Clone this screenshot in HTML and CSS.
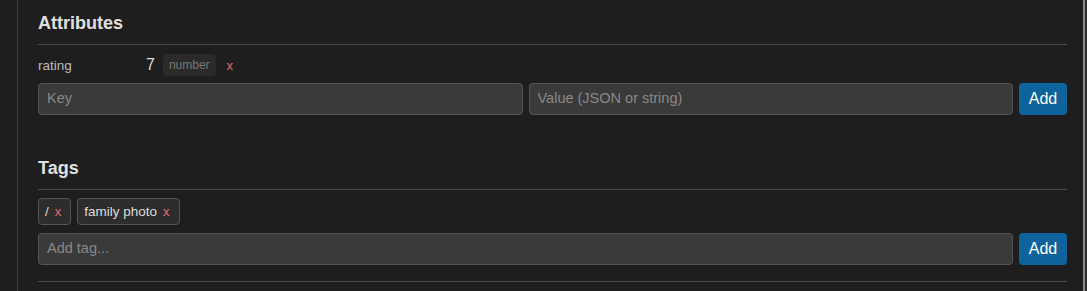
FILE: index.html
```html
<!DOCTYPE html>
<html lang="en">
<head>
  <meta charset="UTF-8" />
  <title>Item Details</title>
  <link rel="stylesheet" href="styles.css">
</head>
<body>
  <div class="sidebar"></div>
  <div class="panel">
    <section class="section">
      <h3>Attributes</h3>
      <div class="attr-row">
        <span class="attr-key">rating</span>
        <span class="attr-value">7</span>
        <span class="attr-type">number</span>
        <span class="remove">x</span>
      </div>
      <div class="add-row">
        <input type="text" placeholder="Key" />
        <input type="text" placeholder="Value (JSON or string)" />
        <button>Add</button>
      </div>
    </section>

    <section class="section">
      <h3>Tags</h3>
      <div class="tag-list">
        <span class="tag">/ <span class="remove">x</span></span>
        <span class="tag">family photo <span class="remove">x</span></span>
      </div>
      <div class="add-row">
        <input type="text" placeholder="Add tag..." />
        <button>Add</button>
      </div>
    </section>

    <div class="divider"></div>
  </div>
  <div class="edge"></div>
</body>
</html>
```

FILE: styles.css
```css
body {
  margin: 0;
  display: flex;
  height: 291px;
  overflow: hidden;
  font-family: 'Liberation Sans', Arial, sans-serif;
  background-color: #1e1e1e;
  color: #ddd;
}
.sidebar {
  width: 17px;
  flex-shrink: 0;
  border-right: 1px solid #3c3c3c;
}
.panel {
  flex: 1;
  padding: 0 16px 0 20px;
  border-right: 2px solid #8a8a8a;
}
.edge {
  width: 2px;
  flex-shrink: 0;
  background: #2b2b2b;
}
.section {
  margin-bottom: 30px;
}
.section h3 {
  margin: 0;
  padding: 13px 0 10px;
  font-size: 18px;
  font-weight: 700;
  line-height: 21px;
  color: #e0e0e0;
  border-bottom: 1px solid #4a4a4a;
}
.attr-row {
  display: flex;
  align-items: center;
  height: 22px;
  margin: 9px 0 7px;
  font-size: 13.5px;
}
.attr-key {
  width: 108px;
  color: #bbb;
}
.attr-value {
  font-size: 16px;
  color: #ddd;
  margin-right: 8px;
}
.attr-type {
  background: #2a2a2a;
  color: #777;
  font-size: 12px;
  padding: 4px 6px;
  border-radius: 4px;
  margin-right: 11px;
}
.remove {
  color: #e06c75;
  font-size: 13px;
}
.add-row {
  display: flex;
  gap: 6px;
}
.add-row input {
  flex: 1;
  min-width: 0;
  height: 32px;
  box-sizing: border-box;
  padding: 0 8px 2px;
  background: #3a3a3a;
  border: 1px solid #555;
  border-radius: 4px;
  color: #ddd;
  font-family: inherit;
  font-size: 14.5px;
}
.add-row input::placeholder {
  color: #888;
}
.add-row button {
  width: 48px;
  height: 32px;
  border: none;
  border-radius: 4px;
  background: #0e639c;
  color: #fff;
  font-family: inherit;
  font-size: 16px;
  padding: 0;
}
.tag-list {
  display: flex;
  gap: 6px;
  margin: 8px 0 8px;
}
.tag {
  display: inline-flex;
  align-items: center;
  gap: 6px;
  height: 27px;
  box-sizing: border-box;
  padding: 0 9px 0 6px;
  background: #2d2d2d;
  border: 1px solid #555;
  border-radius: 4px;
  font-size: 13.5px;
  color: #ddd;
}
.divider {
  border-top: 1px solid #4a4a4a;
  margin-top: -14px;
}
```
